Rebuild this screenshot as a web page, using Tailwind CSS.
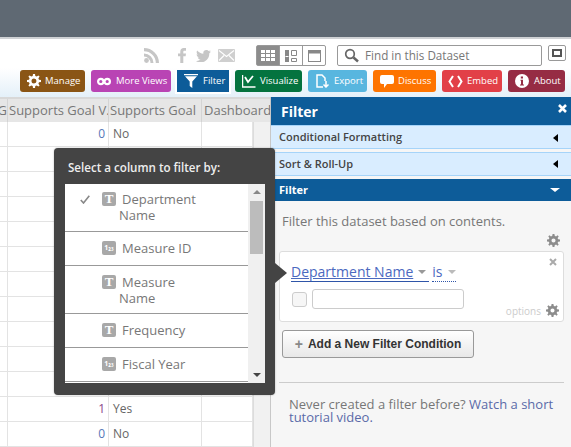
<!DOCTYPE html>
<html><head><meta charset="utf-8"><script src="https://cdn.jsdelivr.net/npm/@tailwindcss/browser@4"></script></head>
<body class="m-0">
<div class="relative w-[571px] h-[447px] overflow-hidden bg-white font-['Open_Sans',sans-serif] text-[#666]">
  <div class="h-[39px] bg-[#5f6973] border-b-[2px] border-[#cfd2d5]"></div>
  <div class="h-[58px] bg-gradient-to-b from-white from-50% to-[#e4f0f9] flex flex-col">
    <div class="h-[31px] flex items-start pt-[6px]">
      <svg class="ml-[144px] mt-[3px] w-[15px] h-[15px]" viewBox="0 0 15 15" fill="#c6c6c6"><circle cx="2.500" cy="12.500" r="2.400"/><path d="M0 5.500v3a6.500 6.500 0 0 1 6.500 6.500h3A9.500 9.500 0 0 0 0 5.500z"/><path d="M0 0v3.200A11.800 11.800 0 0 1 11.800 15H15A15 15 0 0 0 0 0z"/></svg>
      <svg class="ml-[19px] mt-[3px] w-[8px] h-[15px]" viewBox="0 0 8 15" fill="#c6c6c6"><path d="M2.300 15V8.300H0V5.600h2.300V3.600C2.300 1.200 3.700 0 5.700 0H8v2.700H6.500c-.9 0-1.200.4-1.200 1.200v1.700H8l-.4 2.700H5.300V15z"/></svg>
      <svg class="ml-[10px] mt-[5px] w-[15px] h-[12px]" viewBox="0 0 15 12" fill="#c6c6c6"><path d="M15 1.500c-.6.3-1.100.4-1.800.5.6-.4 1.100-1 1.300-1.700-.6.4-1.200.6-1.900.8A3 3 0 0 0 7.400 3.800C5 3.700 2.800 2.500 1.100.6.300 2 .7 3.800 2 4.700c-.5 0-1-.1-1.400-.4 0 1.500 1 2.800 2.500 3.100-.5.100-.9.100-1.400.1.400 1.200 1.500 2.100 2.900 2.100A6.200 6.200 0 0 1 0 10.900 8.600 8.600 0 0 0 13.300 3.300c.7-.4 1.200-1 1.700-1.800z"/></svg>
      <svg class="ml-[7px] mt-[4px] w-[17px] h-[13px]" viewBox="0 0 17 13"><rect width="17" height="13" rx="1" fill="#cfcfcf"/><path d="M1 1.500l7.500 6 7.500-6M1 11.500l5-5M16 11.500l-5-5" fill="none" stroke="#fff" stroke-width="1.100"/></svg>
      <div class="ml-[21px] flex w-[70px] h-[21px] border border-[#999] rounded-[2px] bg-white">
        <div class="w-[23px] bg-[#8c8c8c] flex items-center justify-center border-r border-[#999]">
          <svg class="w-[14px] h-[11px]" viewBox="0 0 14 11" fill="#fff"><path d="M0 0h4v3H0zM5 0h4v3H5zM10 0h4v3h-4zM0 4h4v3H0zM5 4h4v3H5zM10 4h4v3h-4zM0 8h4v3H0zM5 8h4v3H5zM10 8h4v3h-4z"/></svg>
        </div>
        <div class="w-[23px] flex items-center justify-center border-r border-[#999]">
          <svg class="w-[12px] h-[12px]" viewBox="0 0 12 12"><path d="M0 0h4v12H0z" fill="#888"/><path d="M.5 6.500h3" stroke="#fff"/><path d="M6.500.5h5v5h-5zM6.500 8.500h5v3h-5z" fill="none" stroke="#888"/></svg>
        </div>
        <div class="flex-1 flex items-center justify-center">
          <svg class="w-[13px] h-[12px]" viewBox="0 0 13 12"><rect x=".5" y=".5" width="12" height="11" fill="none" stroke="#888"/><rect width="13" height="3.500" fill="#888"/></svg>
        </div>
      </div>
      <div class="ml-[11px] w-[205px] h-[21px] border border-[#999] rounded-[2px] bg-white flex items-center pl-[6px]">
        <svg class="w-[15px] h-[15px]" viewBox="0 0 15 15" fill="none" stroke="#666"><circle cx="6" cy="6" r="4.300" stroke-width="1.700"/><path d="M9.500 9.500l4.500 4" stroke-width="2.500"/></svg>
        <span class="ml-[6px] text-[11.700px] text-[#777] leading-none">Find in this Dataset</span>
      </div>
      <div class="ml-[6px] w-[18px] h-[16px] border border-[#999] rounded-[2px] bg-white flex items-center justify-center">
        <div class="w-[10px] h-[8px] border-2 border-[#555]"></div>
      </div>
    </div>
    <div class="flex items-start pl-[20px] h-[27px] text-[9.500px] whitespace-nowrap">
      <div class="w-[65px] h-[22px] rounded-[3px] bg-[#8a5515] text-white flex items-center pl-[7px]">
        <svg class="w-[14px] h-[14px]" viewBox="0 0 14 14" fill="#fff"><path fill-rule="evenodd" d="M6 0h2l.3 2 1.400.6L11.400 1.400 12.600 2.600l-1.200 1.700.6 1.400 2 .3v2l-2 .3-.6 1.400 1.200 1.700-1.200 1.200-1.700-1.200-1.400.6-.3 2H6l-.3-2-1.400-.6-1.700 1.200L1.400 11.400l1.200-1.700L2 8.300 0 8V6l2-.3.6-1.400L1.400 2.600 2.600 1.400l1.700 1.200L5.700 2zM7 4.500a2.500 2.500 0 1 0 0 5 2.500 2.500 0 0 0 0-5z"/></svg>
        <span class="ml-[4px]">Manage</span>
      </div>
      <div class="ml-[6px] w-[80px] h-[22px] rounded-[3px] bg-[#b944b4] text-white flex items-center pl-[6px]">
        <svg class="w-[14px] h-[9px]" viewBox="0 0 14 9" fill="none" stroke="#fff" stroke-width="2.200"><circle cx="3.800" cy="4.500" r="2.700"/><circle cx="10.200" cy="4.500" r="2.700"/></svg>
        <span class="ml-[5px]">More Views</span>
      </div>
      <div class="ml-[4px] w-[56px] h-[24px] bg-white px-[2px]">
        <div class="h-[22px] bg-[#0d5c99] text-white flex items-center pl-[7px]">
          <svg class="w-[14px] h-[14px]" viewBox="0 0 14 14" fill="#fff"><path d="M0 0h14v1.300H0zM1 2.300h12L8.300 7.500V14L5.700 12V7.500z"/></svg>
          <span class="ml-[5px]">Filter</span>
        </div>
      </div>
      <div class="ml-[4px] w-[67px] h-[22px] rounded-[3px] bg-[#04733f] text-white flex items-center pl-[7px]">
        <svg class="w-[14px] h-[14px]" viewBox="0 0 14 14" fill="none" stroke="#fff"><path d="M.5 1v12h13" stroke-width="1.500"/><path d="M3 3l3 5 5-6" stroke-width="1.800"/></svg>
        <span class="ml-[4px]">Visualize</span>
      </div>
      <div class="ml-[6px] w-[59px] h-[22px] rounded-[3px] bg-[#58b6df] text-white flex items-center pl-[8px]">
        <svg class="w-[13px] h-[14px]" viewBox="0 0 13 14" fill="none" stroke="#fff" stroke-width="1.500"><path d="M7 13H1V1h5l3 3v3"/><path d="M10 7v6M7.500 10.500l2.500 2.500 2.500-2.500"/></svg>
        <span class="ml-[5px]">Export</span>
      </div>
      <div class="ml-[6px] w-[63px] h-[22px] rounded-[3px] bg-[#fe7400] text-white flex items-center pl-[7px]">
        <svg class="w-[14px] h-[13px]" viewBox="0 0 14 13" fill="#fff"><path d="M2 0h10a2 2 0 0 1 2 2v5a2 2 0 0 1-2 2H7l-3 4V9H2a2 2 0 0 1-2-2V2a2 2 0 0 1 2-2z"/></svg>
        <span class="ml-[4px]">Discuss</span>
      </div>
      <div class="ml-[6px] w-[60px] h-[22px] rounded-[3px] bg-[#e24048] text-white flex items-center pl-[6px]">
        <svg class="w-[15px] h-[13px]" viewBox="0 0 15 13" fill="none" stroke="#fff" stroke-width="2"><path d="M5 1L1.500 6.500 5 12M10 1l3.500 5.500L10 12"/></svg>
        <span class="ml-[4px]">Embed</span>
      </div>
      <div class="ml-[6px] w-[57px] h-[22px] rounded-[3px] bg-[#962c44] text-white flex items-center pl-[7px]">
        <svg class="w-[14px] h-[14px]" viewBox="0 0 14 14"><circle cx="7" cy="7" r="7" fill="#fff"/><path d="M5.800 2.500h2.200v2H5.800zM5.500 5.800H8v4.700h1v1H5v-1h1V6.800h-.5z" fill="#962c44"/></svg>
        <span class="ml-[5px]">About</span>
      </div>
    </div>
  </div>
  <div class="flex h-[350px]">
    <div class="w-[270px] shrink-0 flex flex-col">
      <div class="h-[25px] bg-[#e6e6e6] border-t-2 border-[#d8d8d8] flex items-center text-[13px] leading-none text-[#777] overflow-hidden whitespace-nowrap">
        <div class="w-[8px] shrink-0 flex justify-end overflow-hidden border-r border-[#d4d4d4] h-full items-center">G</div>
        <div class="w-[101px] shrink-0 overflow-hidden border-r border-[#d4d4d4] h-full flex items-center pl-px">Supports Goal V.</div>
        <div class="w-[93px] shrink-0 overflow-hidden border-r border-[#d4d4d4] h-full flex items-center pl-px">Supports Goal</div>
        <div class="flex-1 pl-[2px]">Dashboard</div>
      </div>
      <div class="flex flex-1 overflow-hidden">
        <div class="w-[253px] shrink-0 text-[12px]">
          <div class="grid grid-cols-[8px_101px_93px_51px] grid-rows-[repeat(13,25px)] [&>div]:border-b [&>div]:border-r [&>div]:border-[#e3e3e3] [&>div]:flex [&>div]:items-center">
            <div></div><div class="justify-end pr-[3px] text-[#5577b8]">0</div><div class="pl-[4px]">No</div><div></div>
            <div></div><div></div><div></div><div></div>
            <div></div><div></div><div></div><div></div>
            <div></div><div></div><div></div><div></div>
            <div></div><div></div><div></div><div></div>
            <div></div><div></div><div></div><div></div>
            <div></div><div></div><div></div><div></div>
            <div></div><div></div><div></div><div></div>
            <div></div><div></div><div></div><div></div>
            <div></div><div></div><div></div><div></div>
            <div></div><div></div><div></div><div></div>
            <div></div><div class="justify-end pr-[3px] text-[#8a4a8a]">1</div><div class="pl-[4px]">Yes</div><div></div>
            <div></div><div class="justify-end pr-[3px] text-[#5577b8]">0</div><div class="pl-[4px]">No</div><div></div>
          </div>
        </div>
        <div class="flex-1 bg-[#f1f1f1] border-l border-[#dcdcdc]"></div>
      </div>
    </div>
    <div class="flex-1 border-l border-[#c8c8c8] bg-[#f6f6f6] flex flex-col">
      <div class="h-[29px] bg-[#0d5c99] text-white font-bold text-[14px] flex items-center justify-between pl-[10px] pr-[3px] border-b border-[#a6d4f9]">
        <span>Filter</span>
        <svg class="w-[9px] h-[9px] -mt-[6px] mr-px" viewBox="0 0 9 9" stroke="#fff" stroke-width="2.600"><path d="M1 1l7 7M8 1L1 8"/></svg>
      </div>
      <div class="h-[23px] pt-px bg-[#d9edff] border-b border-[#a6d4f9] text-[#444] font-semibold text-[11px] flex items-center justify-between pl-[8px] pr-[13px]">
        <span>Conditional Formatting</span><div class="w-0 h-0 border-y-[4.500px] border-y-transparent border-r-[5px] border-r-black"></div>
      </div>
      <div class="h-[3px]"></div>
      <div class="h-[24px] bg-[#d9edff] border-y border-[#a6d4f9] text-[#444] font-semibold text-[11px] flex items-center justify-between pl-[8px] pr-[13px]">
        <span>Sort &amp; Roll-Up</span><div class="w-0 h-0 border-y-[4.500px] border-y-transparent border-r-[5px] border-r-black"></div>
      </div>
      <div class="h-[3px]"></div>
      <div class="h-[22px] bg-[#0d5c99] text-white font-bold text-[11px] flex items-center justify-between pl-[8px] pr-[11px]">
        <span>Filter</span><div class="w-0 h-0 border-x-[5px] border-x-transparent border-t-[4px] border-t-white"></div>
      </div>
      <div class="pl-[8px] pr-[7px] flex-1 flex flex-col">
        <p class="mt-[12px] ml-[3px] text-[13px] leading-[17px] text-[#777]">Filter this dataset based on contents.</p>
        <div class="flex justify-end h-[17px] mt-[4px] pr-[4px]">
          <svg class="w-[13px] h-[13px]" viewBox="0 0 14 14" fill="#8c8c8c"><path fill-rule="evenodd" d="M6 0h2l.3 2 1.400.6L11.400 1.400 12.600 2.600l-1.200 1.700.6 1.400 2 .3v2l-2 .3-.6 1.400 1.200 1.700-1.200 1.200-1.700-1.200-1.400.6-.3 2H6l-.3-2-1.400-.6-1.700 1.200L1.400 11.400l1.200-1.700L2 8.300 0 8V6l2-.3.6-1.400L1.400 2.600 2.600 1.400l1.700 1.200L5.700 2zM7 4.800a2.200 2.200 0 1 0 0 4.400 2.200 2.200 0 0 0 0-4.400z"/></svg>
        </div>
        <div class="relative h-[71px] bg-white border border-[#ddd] rounded-[3px]">
          <svg class="absolute right-[6px] top-[6px] w-[8px] h-[8px]" viewBox="0 0 8 8" stroke="#aaa" stroke-width="2"><path d="M1 1l6 6M7 1L1 7"/></svg>
          <div class="flex items-center pl-[11px] pt-[11px] h-[30px]">
            <div class="flex items-center border-b border-[#2f55a8] h-[19px] pr-[3px]">
              <span class="text-[14px] leading-none text-[#4b69bf] underline underline-offset-1">Department Name</span>
              <div class="ml-[5px] w-0 h-0 border-x-[4px] border-x-transparent border-t-[4px] border-t-[#999]"></div>
            </div>
            <div class="ml-[3px] flex items-center border-b border-dotted border-[#2f55a8] h-[19px]">
              <span class="text-[14px] leading-none text-[#4b69bf]">is</span>
              <div class="ml-[6px] w-0 h-0 border-x-[4px] border-x-transparent border-t-[4px] border-t-[#bbb]"></div>
            </div>
          </div>
          <div class="flex items-center pl-[12px] mt-[7px]">
            <div class="w-[15px] h-[15px] border border-[#ccc] rounded-[3px] bg-[#f6f6f6]"></div>
            <div class="ml-[5px] w-[152px] h-[20px] border border-[#ccc] rounded-[3px] bg-white"></div>
          </div>
          <div class="absolute right-[4px] bottom-[4px] flex items-center">
            <span class="text-[10px] leading-none text-[#ccc]">options</span>
            <svg class="ml-[5px] w-[13px] h-[13px]" viewBox="0 0 14 14" fill="#8c8c8c"><path fill-rule="evenodd" d="M6 0h2l.3 2 1.400.6L11.400 1.400 12.600 2.600l-1.200 1.700.6 1.400 2 .3v2l-2 .3-.6 1.400 1.200 1.700-1.200 1.200-1.700-1.200-1.400.6-.3 2H6l-.3-2-1.400-.6-1.700 1.200L1.400 11.400l1.200-1.700L2 8.300 0 8V6l2-.3.6-1.400L1.400 2.600 2.600 1.400l1.700 1.200L5.700 2zM7 4.800a2.200 2.200 0 1 0 0 4.400 2.200 2.200 0 0 0 0-4.400z"/></svg>
          </div>
        </div>
        <div class="mt-[8px] ml-[3px] w-[192px] h-[28px] border border-[#999] rounded-[3px] bg-gradient-to-b from-white to-[#e8e8e8] flex items-center justify-center font-['Liberation_Sans',sans-serif] font-bold text-[12px] text-[#333]">
          <span class="text-[#888] text-[14px] mr-[5px] leading-none">+</span>Add a New Filter Condition
        </div>
        <div class="mt-[24px] border-t border-[#ccc] pt-[15px] pl-[10px] text-[13px] leading-[13px] text-[#777]">
          Never created a filter before? <span class="text-[#5a6aa8]">Watch a short tutorial video.</span>
        </div>
      </div>
    </div>
  </div>

  <div class="absolute left-[54px] top-[148px] w-[221px] h-[247px] bg-[#444] rounded-[4px] pl-[11px] flex flex-col shadow-[0_0_2px_rgba(0,0,0,0.3)]">
    <div class="h-[36px] pt-[11px] pl-[3px] text-[11.600px] leading-[17px] font-semibold text-[#eee]">Select a column to filter by:</div>
    <div class="w-[200px] h-[199px] bg-white flex overflow-hidden text-[13px] leading-[16px] text-[#777]">
      <div class="w-[183px] shrink-0">
        <div class="relative h-[48px] border-b border-[#999] pt-[7px] pl-[54px]">
          <svg class="absolute left-[15px] top-[11px] w-[10px] h-[9px]" viewBox="0 0 10 9" fill="none" stroke="#888" stroke-width="1.600"><path d="M.8 5l2.700 3L9.300.8"/></svg>
          <div class="absolute left-[37px] top-[8px] w-[14px] h-[14px] bg-[#a8a8a8] rounded-[2px] text-white font-['Liberation_Serif',serif] font-bold text-[13px] leading-[14px] text-center">T</div>
          <div class="pl-[3px]">Department</div><div>Name</div>
        </div>
        <div class="relative h-[34px] border-b border-[#999] pt-[8px] pl-[57px]">
          <div class="absolute left-[37px] top-[9px] w-[14px] h-[14px] bg-[#a8a8a8] rounded-[2px] text-white text-[7px] font-bold leading-[14px] text-center">1₂₃</div>
          Measure ID
        </div>
        <div class="relative h-[48px] border-b border-[#999] pt-[8px] pl-[54px]">
          <div class="absolute left-[37px] top-[9px] w-[14px] h-[14px] bg-[#a8a8a8] rounded-[2px] text-white font-['Liberation_Serif',serif] font-bold text-[13px] leading-[14px] text-center">T</div>
          <div class="pl-[3px]">Measure</div><div>Name</div>
        </div>
        <div class="relative h-[34px] border-b border-[#999] pt-[8px] pl-[57px]">
          <div class="absolute left-[37px] top-[9px] w-[14px] h-[14px] bg-[#a8a8a8] rounded-[2px] text-white font-['Liberation_Serif',serif] font-bold text-[13px] leading-[14px] text-center">T</div>
          Frequency
        </div>
        <div class="relative h-[34px] border-b border-[#999] pt-[8px] pl-[57px]">
          <div class="absolute left-[37px] top-[9px] w-[14px] h-[14px] bg-[#a8a8a8] rounded-[2px] text-white text-[7px] font-bold leading-[14px] text-center">1₂₃</div>
          Fiscal Year
        </div>
      </div>
      <div class="flex-1 bg-[#f0f0f0] flex flex-col items-center">
        <div class="mt-[6px] w-0 h-0 border-x-[4px] border-x-transparent border-b-[4px] border-b-[#888]"></div>
        <div class="mt-[7px] w-[13px] h-[53px] bg-[#bcbcbc]"></div>
        <div class="mt-auto mb-[6px] w-0 h-0 border-x-[4px] border-x-transparent border-t-[4px] border-t-[#444]"></div>
      </div>
    </div>
  </div>
  <div class="absolute left-[275px] top-[263px] w-0 h-0 border-y-[10px] border-y-transparent border-l-[12px] border-l-[#444]"></div>
</div>
</body></html>
